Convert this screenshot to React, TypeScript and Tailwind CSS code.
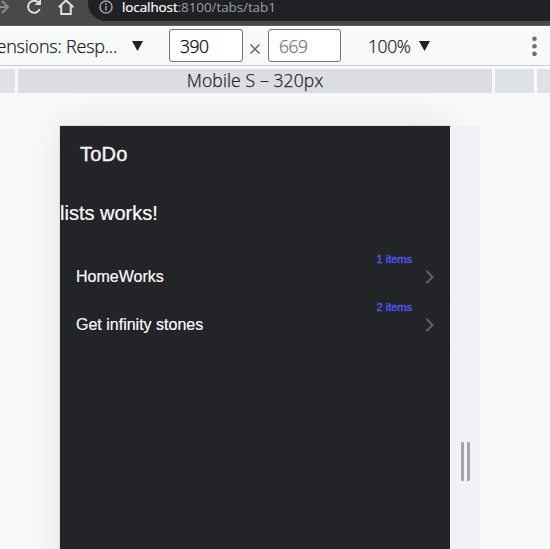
const rows = [
  { name: "HomeWorks", count: 1 },
  { name: "Get infinity stones", count: 2 },
];

function Caret() {
  return (
    <svg width="11" height="10" viewBox="0 0 11 10" fill="#202124">
      <path d="M0 0h11L5.5 10z" />
    </svg>
  );
}

function BrowserBar() {
  return (
    <header className="flex h-[26px] shrink-0 items-start border-b border-[#5d5c5b] bg-[#4a4948]">
      <svg className="shrink-0" width="88" height="21" viewBox="0 0 88 21" fill="none" strokeWidth="2">
        <path d="M0 7h8M2 1l6 6-6 6" stroke="#8b8b8b" />
        <path d="M38.6 2.8A6 6 0 1 0 39.7 9" stroke="#dedede" />
        <path d="M41 -1v6h-6.5z" fill="#dedede" />
        <path d="M58.7 7.3 66 .4l7.3 6.9M61.2 5.5V14h9.6V5.5" stroke="#dedede" />
      </svg>
      <div className="flex h-[21px] flex-1 items-start rounded-bl-[18px] bg-[#202124] pl-[11px]">
        <svg width="14" height="14" viewBox="0 0 14 14" fill="none" stroke="#9aa0a6" strokeWidth="1.6">
          <circle cx="7" cy="7" r="6" />
          <path d="M7 6v4.5M7 3.3v1.6" />
        </svg>
        <p className="ml-[9px] font-['Open_Sans',sans-serif] text-[13.5px] leading-[14px] tracking-[-0.1px] whitespace-nowrap text-[#9aa0a6]">
          <span className="text-white [-webkit-text-stroke:0.2px_white]">localhost</span>:8100/tabs/tab1
        </p>
      </div>
    </header>
  );
}

function DeviceToolbar() {
  return (
    <div className="flex h-10 shrink-0 items-start border-b border-[#cacdd1] bg-[#f8faf9] font-['Open_Sans',sans-serif] text-[18px] leading-[40px] font-light text-[#202124] [-webkit-text-stroke:0.25px_currentColor]">
      <div className="flex w-[117px] shrink-0 justify-end whitespace-nowrap tracking-[-0.22px]">
        <span>Dimensions: Resp...</span>
      </div>
      <div className="ml-[15px] w-[11px] pt-[15px]"><Caret /></div>
      <div className="mt-[3px] ml-[26px] h-[33px] w-[74px] rounded-[3px] border border-[#767676] bg-white pl-[10px] text-[17.5px] leading-[33px] tracking-[-0.5px] text-black">390</div>
      <svg className="mt-[18px] ml-[7px]" width="10" height="10" viewBox="0 0 10 10" stroke="#5f6368" strokeWidth="1.4">
        <path d="M.5.5l9 9M9.5.5l-9 9" />
      </svg>
      <div className="mt-[3px] ml-[8px] h-[33px] w-[73px] rounded-[3px] border border-[#767676] bg-white pl-[10px] text-[17.5px] leading-[33px] tracking-[-0.5px] text-[#757575]">669</div>
      <span className="ml-[27px] w-[51px] text-[17.5px] tracking-[-0.4px]">100%</span>
      <div className="w-[11px] pt-[15px]"><Caret /></div>
      <svg className="mt-[10px] mr-[13px] ml-auto" width="5" height="20" viewBox="0 0 5 20" fill="#6e6e6e">
        <circle cx="2.5" cy="2.8" r="2.3" />
        <circle cx="2.5" cy="10.3" r="2.3" />
        <circle cx="2.5" cy="17.8" r="2.3" />
      </svg>
    </div>
  );
}

function Ruler() {
  return (
    <div className="mt-[3px] flex h-6 shrink-0 gap-[3px]">
      <div className="w-[15px] bg-[#dee1e6]" />
      <div className="w-[474px] bg-[#dcdde1] text-center font-['Open_Sans',sans-serif] text-[17.5px] leading-[23px] font-light tracking-[0.14px] text-[#202124] [-webkit-text-stroke:0.25px_#202124]">
        Mobile S – 320px
      </div>
      <div className="w-[39px] bg-[#dee1e6]" />
      <div className="flex-1 bg-[#dee1e6]" />
    </div>
  );
}

export default function App() {
  return (
    <div className="flex h-[549px] w-[550px] flex-col overflow-hidden bg-[#f8faf9]">
      <BrowserBar />
      <DeviceToolbar />
      <Ruler />
      <div className="flex flex-1 overflow-hidden pt-[33px] pl-[60px]">
        <main className="h-[600px] w-[390px] bg-[#232428] font-['Liberation_Sans',Arial,sans-serif] text-white shadow-[0_0_0_1px_#dbdedd,0_0_40px_rgba(0,0,0,0.09)]">
          <h1 className="h-14 pl-5 text-[20px] leading-[56px] tracking-[0.2px] text-[#f4f4f4] [-webkit-text-stroke:0.4px_#f4f4f4]">ToDo</h1>
          <p className="mt-[19px] text-[20px] leading-6 [-webkit-text-stroke:0.2px_white]">lists works!</p>
          <ul className="mt-[28px]">
            {rows.map((row) => (
              <li key={row.name} className="ml-4 flex h-12 border-b border-[#1f2024]">
                <span className="flex-1 text-[16px] leading-[47px] [-webkit-text-stroke:0.15px_white]">{row.name}</span>
                <span className="text-[11px] leading-[12px] text-[#4c5aff] [-webkit-text-stroke:0.35px_#4c5aff]">{row.count} items</span>
                <svg className="mt-[17px] mr-[15px] ml-[13px]" width="10" height="14" viewBox="0 0 10 14" fill="none" stroke="#626366" strokeWidth="2">
                  <path d="M1.5 1l6 6-6 6" />
                </svg>
              </li>
            ))}
          </ul>
        </main>
        <div className="flex h-[600px] w-[30px] justify-center gap-[3px] bg-[#f1f2f5] pt-[316px]">
          <div className="h-[39px] w-[3px] rounded-[1px] bg-[#a5a5a5]" />
          <div className="h-[39px] w-[3px] rounded-[1px] bg-[#a5a5a5]" />
        </div>
      </div>
    </div>
  );
}
